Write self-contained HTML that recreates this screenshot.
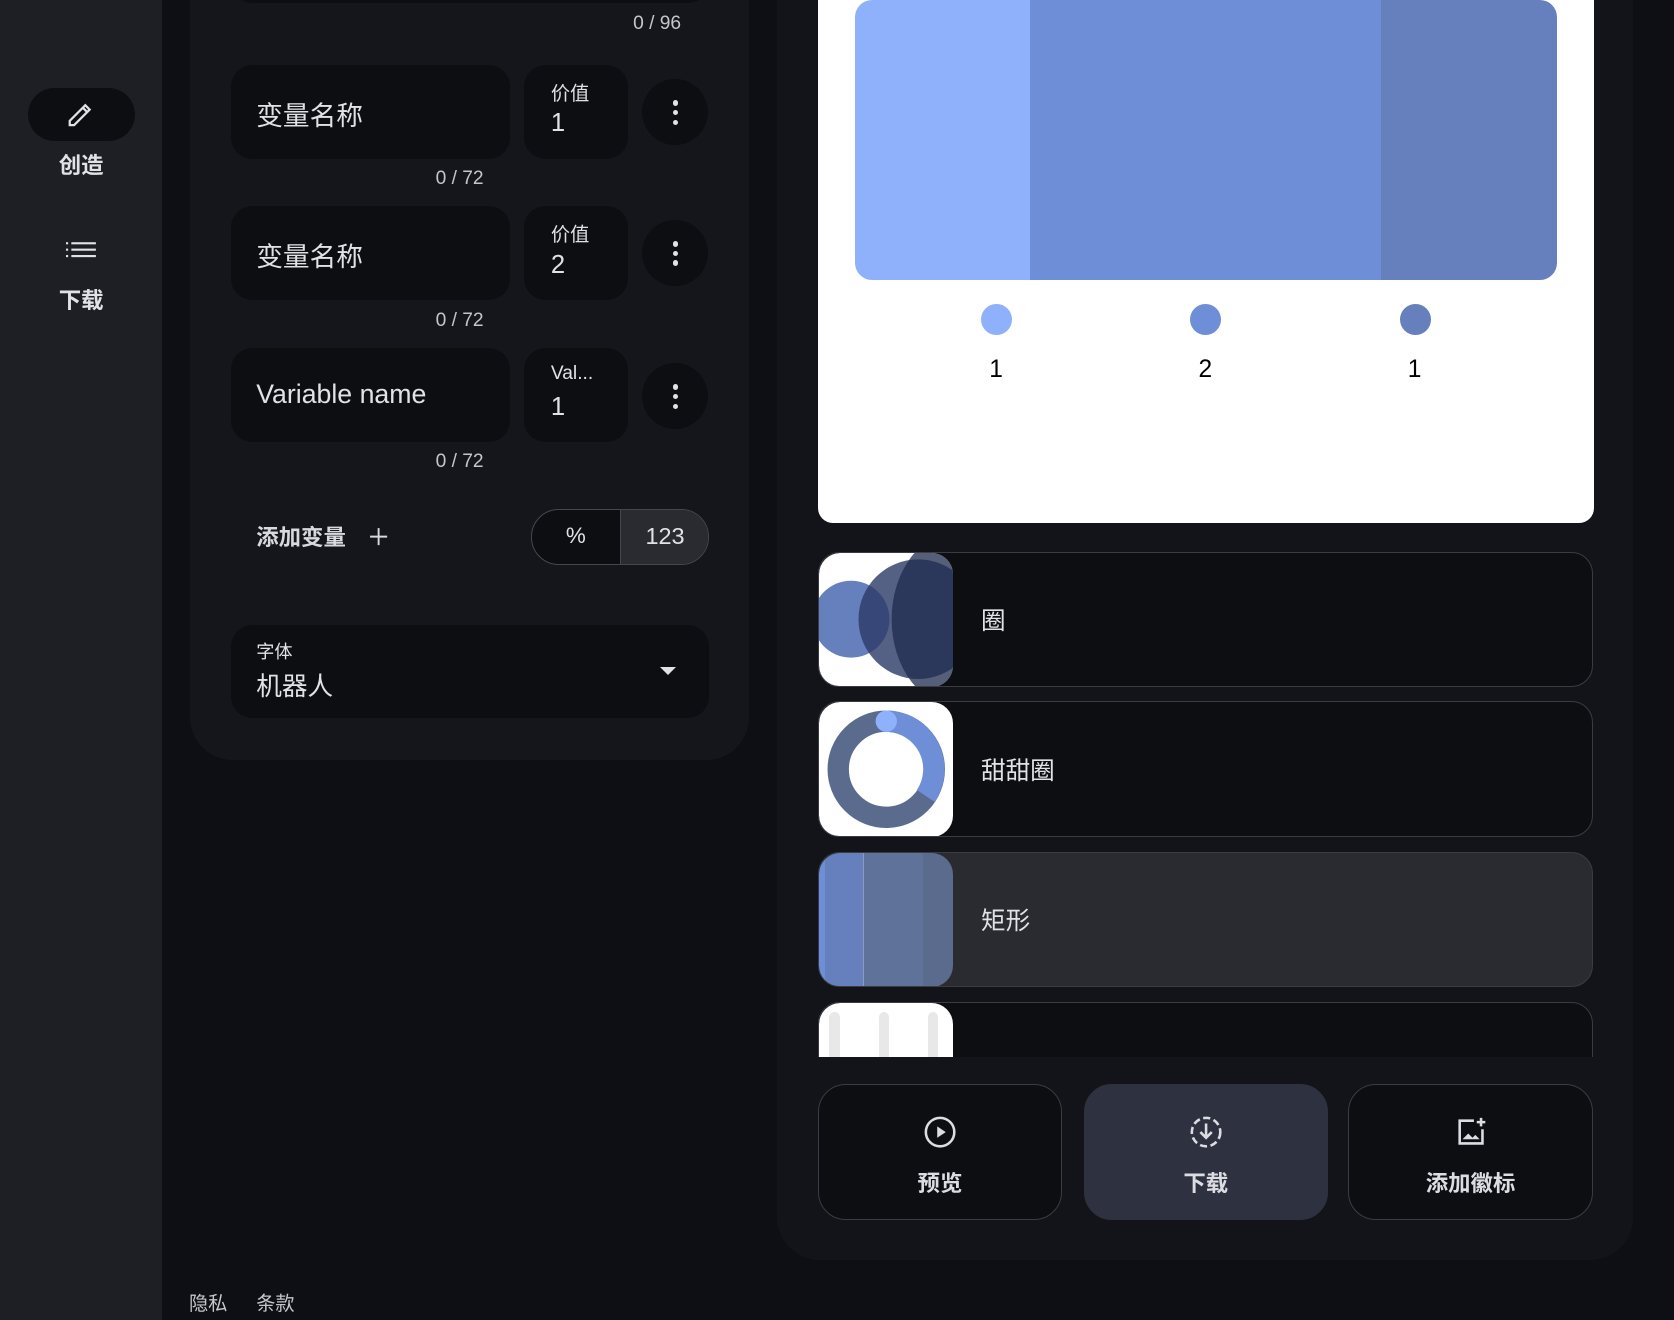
<!DOCTYPE html>
<html><head><meta charset="utf-8"><style>
html{zoom:1.0676}
body{margin:0;width:1568px;height:1236px;overflow:hidden;background:#0d0f14;font-family:"Liberation Sans","Noto Sans CJK SC",sans-serif;color:#e2e2e6;position:relative}
.a{position:absolute}
.rail{left:0;top:0;width:152px;height:1236px;background:#1e1f24}
.lp{left:178px;top:-60px;width:524px;height:772px;background:#15161b;border-radius:40px}
.rp{left:728px;top:-60px;width:802px;height:1240px;background:#121419;border-radius:40px}
.fld{background:#0d0e12;border-radius:20px}
.cnt{font-size:18px;color:#c4c6cc}
.dots{width:62px;height:62px;border-radius:50%;background:#0d0e12}
.dots i{position:absolute;left:29px;width:5px;height:5px;border-radius:50%;background:#e2e2e6}
.item{left:766px;width:724px;border:1px solid #3a3c42;border-radius:20px;background:#0d0e12;overflow:hidden}
.thumb{position:absolute;left:0;top:0;width:126px;height:126px;background:#fff;border-radius:20px;overflow:hidden}
.lbl{position:absolute;left:152px;font-size:23px;color:#e2e2e6}
.btn{top:1015px;width:227px;height:126px;border:1px solid #3a3c42;border-radius:26px;background:#0d0e12;text-align:center}
.btn span{position:absolute;left:0;right:0;top:76px;font-size:21px;font-weight:bold;color:#dcdde2}
.btn svg{position:absolute;left:98px;top:28px}
</style></head><body>
<div class="a rail"></div>
<div class="a" style="left:26px;top:82px;width:100px;height:50px;border-radius:25px;background:#0d0e12"></div>
<svg class="a" style="left:62px;top:93px" width="28" height="28" viewBox="0 0 24 24"><path d="M3 21v-3.5L15.5 5l3.5 3.5L6.5 21z M13.5 7l3.5 3.5" fill="none" stroke="#e2e2e6" stroke-width="1.8"/></svg>
<div class="a" style="left:0;width:152px;top:139px;text-align:center;font-size:21px;font-weight:bold">创造</div>
<svg class="a" style="left:62px;top:224px" width="30" height="20" viewBox="0 0 30 20"><g fill="#e2e2e6"><rect x="0" y="3" width="2" height="2"/><rect x="0" y="9" width="2" height="2"/><rect x="0" y="15" width="2" height="2"/><rect x="5" y="3" width="23" height="2"/><rect x="5" y="9" width="23" height="2"/><rect x="5" y="15" width="23" height="2"/></g></svg>
<div class="a" style="left:0;width:152px;top:265px;text-align:center;font-size:21px;font-weight:bold">下载</div>

<div class="a lp"></div>
<div class="a fld" style="left:216px;top:-40px;width:448px;height:43px"></div>
<div class="a cnt" style="left:560px;width:78px;text-align:right;top:12px">0 / 96</div>

<div class="a fld" style="left:216px;top:61px;width:262px;height:88px"></div>
<div class="a" style="left:240px;top:88px;font-size:25px">变量名称</div>
<div class="a fld" style="left:491px;top:61px;width:97px;height:88px"></div>
<div class="a" style="left:516px;top:73px;font-size:18px">价值</div>
<div class="a" style="left:516px;top:102px;font-size:24px">1</div>
<div class="a dots" style="left:601px;top:74px"><i style="top:20px"></i><i style="top:29px"></i><i style="top:38px"></i></div>
<div class="a cnt" style="left:380px;width:73px;text-align:right;top:157px">0 / 72</div>

<div class="a fld" style="left:216px;top:193px;width:262px;height:88px"></div>
<div class="a" style="left:240px;top:220px;font-size:25px">变量名称</div>
<div class="a fld" style="left:491px;top:193px;width:97px;height:88px"></div>
<div class="a" style="left:516px;top:205px;font-size:18px">价值</div>
<div class="a" style="left:516px;top:235px;font-size:24px">2</div>
<div class="a dots" style="left:601px;top:206px"><i style="top:20px"></i><i style="top:29px"></i><i style="top:38px"></i></div>
<div class="a cnt" style="left:380px;width:73px;text-align:right;top:290px">0 / 72</div>

<div class="a fld" style="left:216px;top:326px;width:262px;height:88px"></div>
<div class="a" style="left:240px;top:355px;font-size:25px">Variable name</div>
<div class="a fld" style="left:491px;top:326px;width:97px;height:88px"></div>
<div class="a" style="left:516px;top:340px;font-size:18px">Val...</div>
<div class="a" style="left:516px;top:368px;font-size:24px">1</div>
<div class="a dots" style="left:601px;top:340px"><i style="top:20px"></i><i style="top:29px"></i><i style="top:38px"></i></div>
<div class="a cnt" style="left:380px;width:73px;text-align:right;top:422px">0 / 72</div>

<div class="a" style="left:240px;top:487px;font-size:21px;font-weight:bold;color:#d8d9de">添加变量</div>
<svg class="a" style="left:346px;top:494px" width="18" height="18"><path d="M9 1v16M1 9h16" stroke="#d8d9de" stroke-width="1.8"/></svg>
<div class="a" style="left:497px;top:477px;width:165px;height:50px;border:1px solid #45474d;border-radius:26px;overflow:hidden;background:#0d0e12">
<div class="a" style="left:83px;top:0;width:82px;height:50px;background:#2a2b30;border-left:1px solid #45474d"></div>
<div class="a" style="left:0;width:83px;top:12px;text-align:center;font-size:21px">%</div>
<div class="a" style="left:84px;width:82px;top:12px;text-align:center;font-size:22px">123</div>
</div>

<div class="a fld" style="left:216px;top:585px;width:448px;height:88px"></div>
<div class="a" style="left:240px;top:598px;font-size:17px">字体</div>
<div class="a" style="left:240px;top:624px;font-size:24px">机器人</div>
<div class="a" style="left:618px;top:625px;width:0;height:0;border-left:8px solid transparent;border-right:8px solid transparent;border-top:8px solid #e2e2e6"></div>

<div class="a" style="left:177px;top:1206px;font-size:18px;color:#c4c6cc">隐私</div>
<div class="a" style="left:240px;top:1206px;font-size:18px;color:#c4c6cc">条款</div>

<div class="a rp"></div>
<div class="a" style="left:766px;top:-30px;width:727px;height:520px;background:#fff;border-radius:14px"></div>
<div class="a" style="left:801px;top:0;width:657px;height:262px;border-radius:16px;overflow:hidden">
<div class="a" style="left:0;top:0;width:164px;height:262px;background:#8fb0fb"></div>
<div class="a" style="left:164px;top:0;width:329px;height:262px;background:#6e8fd7"></div>
<div class="a" style="left:493px;top:0;width:164px;height:262px;background:#6680bd"></div>
</div>
<div class="a" style="left:919px;top:285px;width:29px;height:29px;border-radius:50%;background:#8fb0fb"></div>
<div class="a" style="left:1115px;top:285px;width:29px;height:29px;border-radius:50%;background:#6e8fd7"></div>
<div class="a" style="left:1311px;top:285px;width:29px;height:29px;border-radius:50%;background:#6680bd"></div>
<div class="a" style="left:903px;width:60px;text-align:center;top:333px;font-size:23px;color:#000">1</div>
<div class="a" style="left:1099px;width:60px;text-align:center;top:333px;font-size:23px;color:#000">2</div>
<div class="a" style="left:1295px;width:60px;text-align:center;top:333px;font-size:23px;color:#000">1</div>

<div class="a item" style="top:517px;height:125px">
<div class="thumb"><svg width="126" height="126"><circle cx="30" cy="62" r="36" fill="#6680bd"/><circle cx="93" cy="62" r="56" fill="#2a3866" opacity=".8"/><ellipse cx="130" cy="62" rx="62" ry="82" fill="#1e2a4e" opacity=".75"/></svg></div>
<div class="lbl" style="top:46px">圈</div></div>
<div class="a item" style="top:657px;height:125px">
<div class="thumb"><svg width="126" height="126"><circle cx="63" cy="63" r="45" fill="none" stroke="#5b6b8e" stroke-width="20"/><path d="M63 18 A45 45 0 0 1 100 88" fill="none" stroke="#6e8fd7" stroke-width="20"/><circle cx="63" cy="18" r="10" fill="#8fb0fb"/></svg></div>
<div class="lbl" style="top:46px">甜甜圈</div></div>
<div class="a item" style="top:798px;height:125px;background:#2a2b31">
<div class="thumb" style="background:#5b6b8e"><div class="a" style="left:0;top:0;width:6px;height:126px;background:#6e8fd7"></div><div class="a" style="left:6px;top:0;width:35px;height:126px;background:#6680bd"></div><div class="a" style="left:41px;top:0;width:1px;height:126px;background:#8a9ac0"></div><div class="a" style="left:42px;top:0;width:56px;height:126px;background:#5f7299"></div></div>
<div class="lbl" style="top:46px">矩形</div></div>
<div class="a item" style="top:939px;height:60px;border-bottom:none;border-radius:20px 20px 0 0">
<div class="thumb"><div class="a" style="left:10px;top:8px;width:10px;height:60px;border-radius:5px;background:#e8e8e8"></div><div class="a" style="left:56px;top:8px;width:10px;height:60px;border-radius:5px;background:#e8e8e8"></div><div class="a" style="left:102px;top:8px;width:10px;height:60px;border-radius:5px;background:#e8e8e8"></div></div></div>
<div class="a" style="left:740px;top:990px;width:780px;height:20px;background:#121419"></div>

<div class="a btn" style="left:766px"><svg width="32" height="32" viewBox="0 0 24 24"><circle cx="12" cy="12" r="10" fill="none" stroke="#dcdde2" stroke-width="1.8"/><path d="M10 8l6 4-6 4z" fill="#dcdde2"/></svg><span>预览</span></div>
<div class="a btn" style="left:1015px;background:#2e3240;border-color:#2e3240"><svg width="32" height="32" viewBox="0 0 24 24"><circle cx="12" cy="12" r="10" fill="none" stroke="#dcdde2" stroke-width="1.8" stroke-dasharray="5 2.5"/><path d="M12 6v10M8 12l4 4 4-4" fill="none" stroke="#dcdde2" stroke-width="1.8"/></svg><span>下载</span></div>
<div class="a btn" style="left:1263px"><svg width="32" height="32" viewBox="0 0 24 24"><path d="M14 4H4v16h16V10" fill="none" stroke="#dcdde2" stroke-width="1.8"/><path d="M19 2v6M16 5h6" stroke="#dcdde2" stroke-width="1.8"/><path d="M6 17l4-4 3 3 2-2 3 3z" fill="#dcdde2"/></svg><span>添加徽标</span></div>
</body></html>
